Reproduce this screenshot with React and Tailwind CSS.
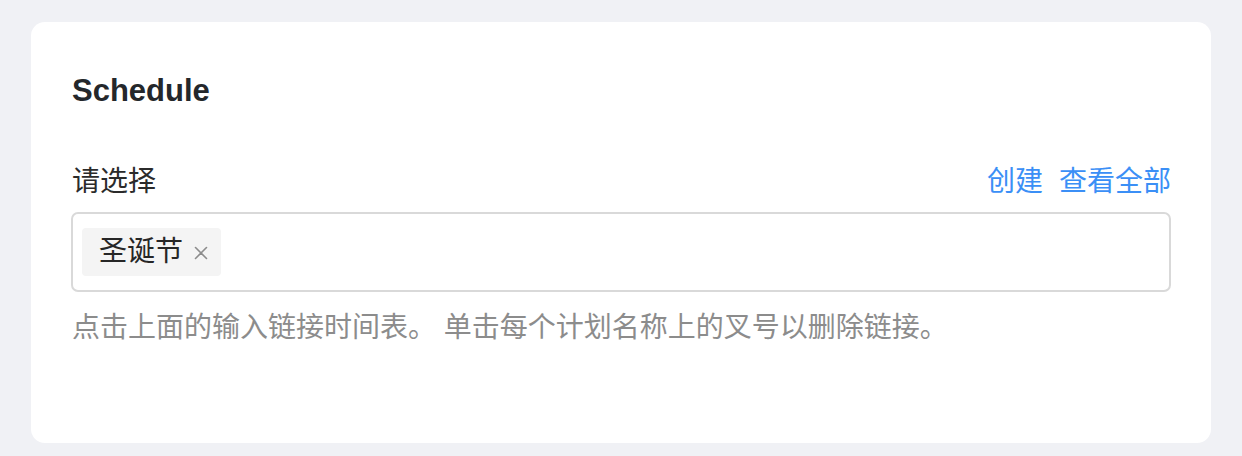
export default function App() {
  const cjk = { fontFamily: '"Liberation Sans", "Noto Sans CJK SC", sans-serif' };
  return (
    <div className="min-h-[456px] w-full bg-[#f0f1f5] pt-[22px] pl-[31px]" style={cjk}>
      <div className="w-[1180px] h-[421px] bg-white rounded-[14px] px-[40px] pt-[49px]">
        <h1 className="text-[31px] leading-[40px] font-bold text-[#24272b] pl-[1px]">Schedule</h1>
        <div className="mt-[51px] flex items-center justify-between leading-[40px]">
          <span className="text-[28px] text-[#2b2b2b] pl-[1px]">请选择</span>
          <div className="flex items-center gap-[16px] text-[28px] text-[#3b8ff6]">
            <span>创建</span>
            <span>查看全部</span>
          </div>
        </div>
        <div className="mt-[10px] h-[80px] w-[1100px] border-2 border-[#d9d9d9] rounded-[7px] flex items-center pl-[9px]">
          <div className="h-[48px] flex items-center bg-[#f4f4f4] rounded-[4px] pl-[17px] pr-[13px] gap-[11px]">
            <span className="text-[28px] leading-none text-[#262626]">圣诞节</span>
            <svg width="14" height="14" viewBox="0 0 14 14" className="mt-[2px]">
              <path d="M1.5 1.5L12.5 12.5M12.5 1.5L1.5 12.5" stroke="#8c8c8c" strokeWidth="1.6" strokeLinecap="round" />
            </svg>
          </div>
        </div>
        <p className="mt-[16px] text-[28px] leading-[40px] text-[#8c8c8c] pl-[1px]">
          点击上面的输入链接时间表。 单击每个计划名称上的叉号以删除链接。
        </p>
      </div>
    </div>
  );
}
